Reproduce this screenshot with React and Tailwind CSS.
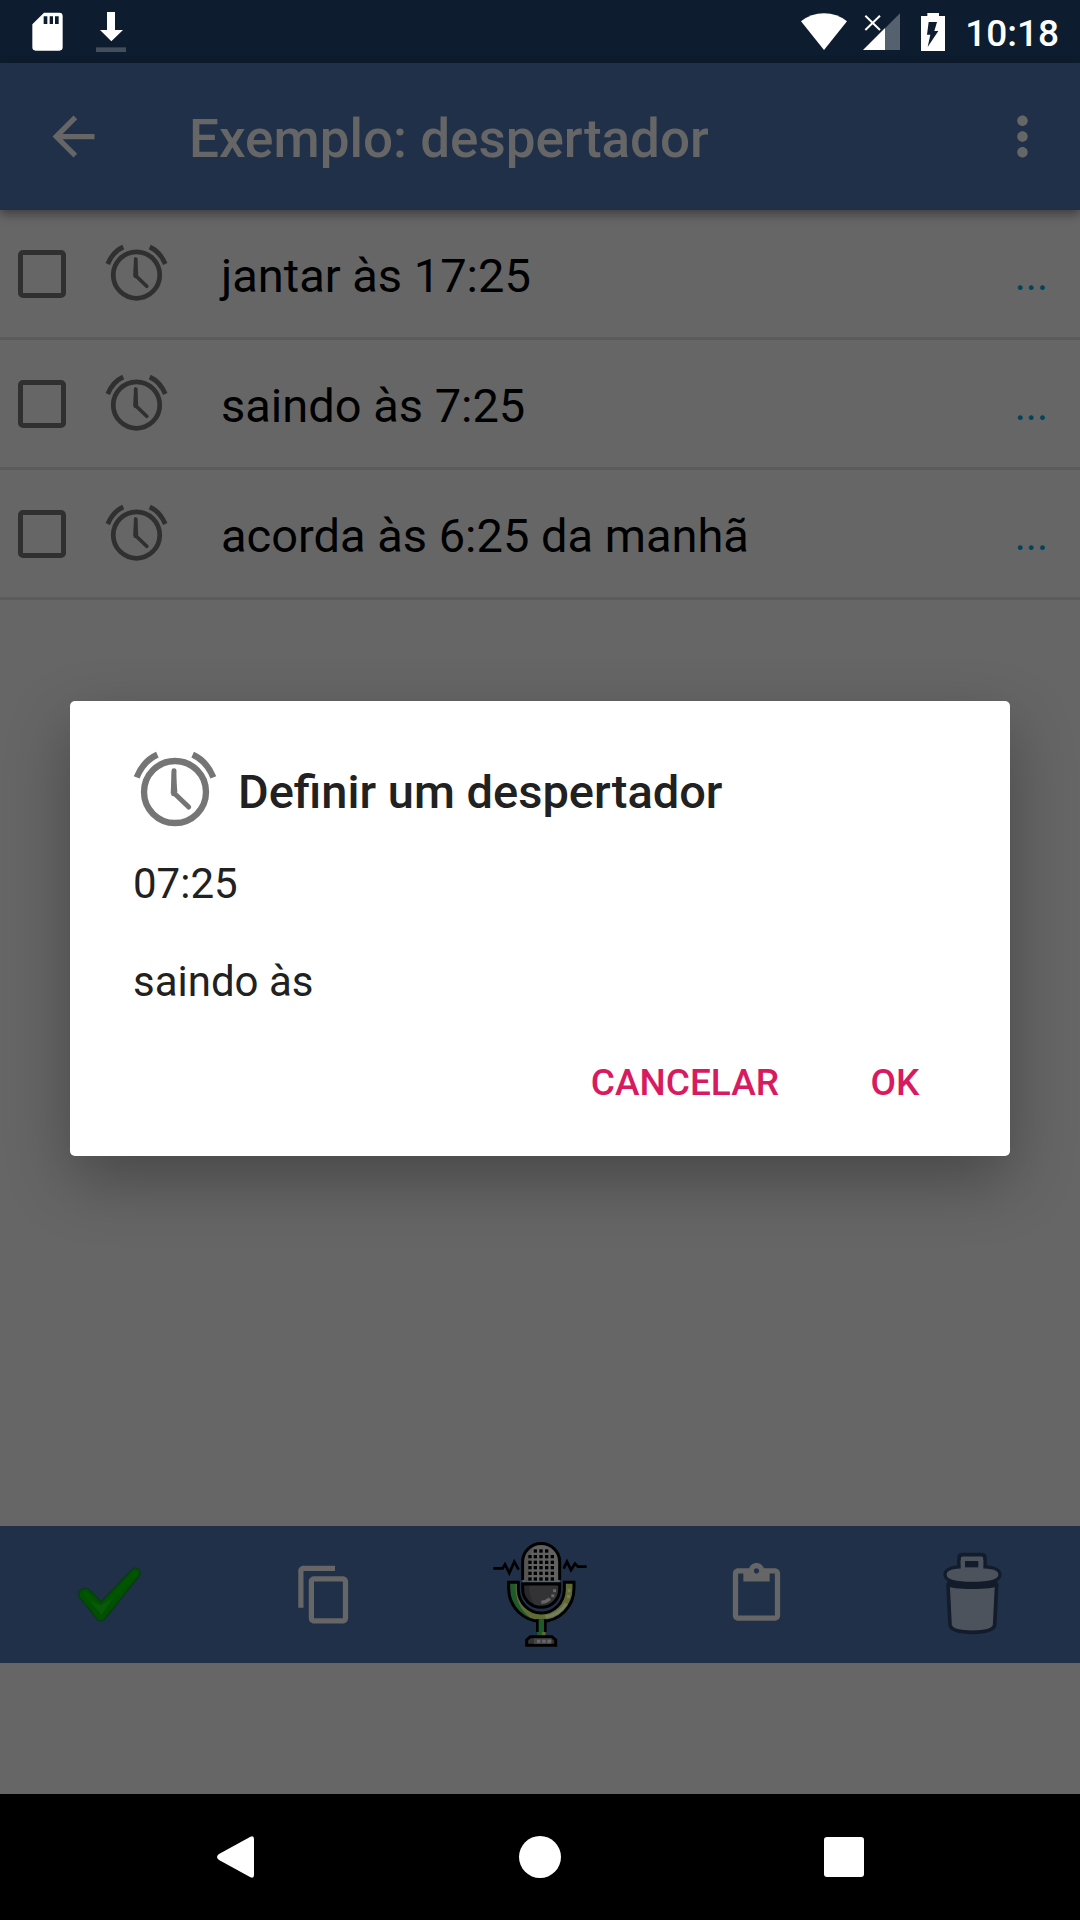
import React from "react";
import {
  MdArrowBack,
  MdMoreVert,
  MdContentCopy,
  MdContentPaste,
} from "react-icons/md";

const items = [
  { id: "a", text: "jantar às 17:25" },
  { id: "b", text: "saindo às 7:25" },
  { id: "c", text: "acorda às 6:25 da manhã" },
];

function AlarmIcon({ className }) {
  return (
    <svg viewBox="0 0 252 252" className={className} fill="none" stroke="currentColor" aria-hidden="true">
      <circle cx="126" cy="132" r="93" strokeWidth="19" />
      <path d="M11 88C24 56 44 33 73 20" strokeWidth="19" />
      <path d="M241 88C228 56 208 33 179 20" strokeWidth="19" />
      <path d="M123 68L122 137" strokeWidth="15" strokeLinecap="round" />
      <path d="M123 135L167 177" strokeWidth="15" strokeLinecap="round" />
      <path d="M117 66h11l5 66-9 10-11-6z" fill="currentColor" stroke="none" />
    </svg>
  );
}

function SdCardIcon() {
  return (
    <svg viewBox="96 36 93 117" className="h-[39px] w-[31px]" aria-hidden="true">
      <path
        fill="#fff"
        fillRule="evenodd"
        d="M132 38H178Q188 38 188 48V142Q188 152 178 152H107Q97 152 97 142V73ZM131 49V72H142V49ZM149 49V72H159V49ZM165 49V72H176V49Z"
      />
    </svg>
  );
}

function DownloadIcon() {
  return (
    <svg viewBox="288 36 90 120" className="h-10 w-[30px]" aria-hidden="true">
      <path fill="#fff" d="M321 36H345V90H369L334 124L300 90H321Z" />
      <path fill="#434e5c" d="M288 142H378V156H288Z" />
    </svg>
  );
}

function WifiIcon() {
  return (
    <svg viewBox="246 37 138 111" className="h-[37px] w-[46px]" aria-hidden="true">
      <path fill="#fff" d="M315 148L246 62Q276 38 315 38T384 62Z" />
    </svg>
  );
}

function SignalIcon() {
  return (
    <svg viewBox="431 37 111 111" className="h-[37px] w-[37px]" aria-hidden="true">
      <path fill="#566170" d="M542 38V148H497V83Z" />
      <path fill="#fff" d="M431 148L497 82V148Z" />
      <path stroke="#fff" strokeWidth="6" d="M438 45L482 88M482 45L438 88" />
    </svg>
  );
}

function BatteryIcon() {
  return (
    <svg viewBox="606 36 72 114" className="h-[38px] w-6" aria-hidden="true">
      <path
        fill="#fff"
        fillRule="evenodd"
        d="M625 36H660V45H678V150H606V45H625ZM629 63L624 101H634L626 138L658 90H646L654 63Z"
      />
    </svg>
  );
}

function CheckIcon() {
  return (
    <svg viewBox="105 155 198 198" className="h-[66px] w-[66px]" aria-hidden="true" strokeLinejoin="round">
      <path
        d="M118 243Q132 228 147 238L183 274L276 178Q287 169 297 178Q305 187 297 198L193 328Q183 337 173 328L119 262Q113 252 118 243Z"
        fill="#005000"
        stroke="#0a3a1c"
        strokeWidth="5"
      />
      <path d="M136 250L183 298L284 190" fill="none" stroke="#005600" strokeWidth="14" strokeLinecap="round" />
      <path d="M150 272L183 285L220 262L184 314Z" fill="#085a0a" />
    </svg>
  );
}

const meshDots = [
  [123, [226, 243, 260]],
  [140, [210, 226, 243, 260, 277]],
  [157, [210, 226, 243, 260, 277]],
  [173, [210, 226, 243, 260, 277]],
  [190, [210, 226, 243, 260, 277]],
  [207, [210, 226, 243, 260, 277]],
];

function MicIcon() {
  return (
    <svg viewBox="96 93 288 321" className="h-[107px] w-24" fill="none" aria-hidden="true">
      <path d="M100 175H128L135 163L148 189L163 155L176 179" stroke="#000" strokeWidth="8" />
      <path d="M311 176L321 155L333 180L345 161L354 170H380" stroke="#000" strokeWidth="8" />
      <path d="M188 216V155a55 55 0 0 1 111 0V216Z" fill="#616161" />
      <path d="M194 216V155Q196 120 225 107Q207 130 207 160V216Z" fill="#555" />
      <path d="M188 210V155a55.500 54.500 0 0 1 111 0V210" stroke="#000" strokeWidth="9" />
      {meshDots.map(([y, xs]) =>
        xs.map((x) => <rect key={x + "-" + y} x={x - 5} y={y - 5} width="10" height="10" fill="#000" />)
      )}
      <path
        d="M146 217H175V240C176 278 206 309 244 309S312 278 313 240V217H342V235C342 290 298 334 244 334S146 290 146 235Z"
        fill="#606b33"
      />
      <path d="M146 217H167V240C169 280 190 312 222 331C178 322 146 285 146 235Z" fill="#1e5a2c" />
      <path d="M256 320C284 317 306 302 319 280" stroke="#747d60" strokeWidth="10" />
      <path d="M323 236h9v11h-9zM321 254h9v10h-9z" fill="#747d60" />
      <path
        d="M146 217H175V240C176 278 206 309 244 309S312 278 313 240V217H342V235C342 290 298 334 244 334S146 290 146 235Z"
        stroke="#000"
        strokeWidth="9"
      />
      <path d="M232 330H256V376H232Z" fill="#1e5a2c" />
      <path d="M246 366H256V376H246Z" fill="#5f6a2f" />
      <path d="M232 328V366M256 328V366" stroke="#000" strokeWidth="8" />
      <path d="M188 222H299V238a55.500 54 0 0 1-111 0Z" fill="#333336" />
      <path d="M192 226H208C206 254 215 276 230 288C206 282 192 262 192 238Z" fill="#29292c" />
      <path d="M188 222H299V238a55.500 54 0 0 1-111 0Z" stroke="#000" strokeWidth="9" />
      <path d="M244 277Q260 275 270 266" stroke="#666" strokeWidth="10" />
      <path d="M274 253h9v9h-9zM279 238h9v9h-9z" fill="#666" />
      <path d="M211 380H276L287 390V406H200V390Z" fill="#333336" stroke="#000" strokeWidth="9" />
      <path d="M222 385H274V402H222Z" fill="#454548" />
      <path d="M231 389h10v9h-10zM247 389h10v9h-10zM262 389h12v9h-12z" fill="#686868" />
    </svg>
  );
}

function TrashIcon() {
  return (
    <svg viewBox="724 121 186 264" className="h-[88px] w-[62px]" fill="#4d535d" stroke="#131c2a" strokeLinejoin="round" aria-hidden="true">
      <path d="M745 222L751 344C755 358 782 365 818 365S881 358 885 344L891 222Z" strokeWidth="11" />
      <path d="M745 222C760 234 876 234 891 222L889 214H747Z" fill="#131c2a" strokeWidth="8" />
      <path d="M778 180V142Q779 132 788 132H846Q855 132 856 142V180Z" strokeWidth="11" />
      <path d="M736 192C736 176 758 168 796 168H840C880 168 901 177 901 192C901 210 868 218 818 218S736 210 736 192Z" strokeWidth="10" />
      <path d="M783 180V148H851V180Z" stroke="none" />
      <path d="M796 151H836V170H796Z" fill="#131c2a" stroke="none" />
    </svg>
  );
}

const tools = [
  { label: "Concluir", icon: <CheckIcon /> },
  { label: "Copiar", icon: <MdContentCopy size={63} /> },
  { label: "Gravar voz", icon: <MicIcon /> },
  { label: "Colar", icon: <MdContentPaste size={63} /> },
  { label: "Excluir", icon: <TrashIcon /> },
];

function StatusBar() {
  return (
    <div className="flex h-[63px] items-center bg-[#0d1c2e] pr-[21px] pl-8 text-white">
      <SdCardIcon />
      <div className="ml-[33px]">
        <DownloadIcon />
      </div>
      <div className="ml-auto flex items-center">
        <WifiIcon />
        <div className="ml-4">
          <SignalIcon />
        </div>
        <div className="ml-[21px]">
          <BatteryIcon />
        </div>
        <span className="ml-5 pt-1 text-[37px] leading-[44px] font-medium">10:18</span>
      </div>
    </div>
  );
}

function NavBar() {
  return (
    <nav className="grid h-[126px] grid-cols-3 bg-black px-[84px]">
      <button aria-label="Voltar" className="flex items-center justify-center">
        <svg viewBox="0 0 38 42" className="h-[42px] w-[38px]" fill="#fff">
          <path d="M2 18L33 1Q37 -1 37 3V39Q37 43 33 41L2 24Q-2 21 2 18Z" />
        </svg>
      </button>
      <button aria-label="Início" className="flex items-center justify-center">
        <span className="size-[42px] rounded-full bg-white" />
      </button>
      <button aria-label="Recentes" className="flex items-center justify-center">
        <span className="size-10 rounded-[3px] bg-white" />
      </button>
    </nav>
  );
}

export default function App() {
  return (
    <div className="flex min-h-screen flex-col bg-[#666666] font-['Roboto',sans-serif]">
      <StatusBar />
      <div className="relative flex flex-1 flex-col">
        <header className="flex h-[147px] items-center bg-[#213049] pr-[26px] pl-[42px] text-[#666666] shadow-[0_4px_10px_rgba(0,0,0,0.4)]">
          <button aria-label="Voltar">
            <MdArrowBack size={63} />
          </button>
          <h1 className="ml-[84px] flex-1 pt-1 text-[53px] leading-[62px] font-medium">Exemplo: despertador</h1>
          <button aria-label="Mais opções">
            <MdMoreVert size={63} />
          </button>
        </header>

        <ul>
          {items.map((item) => (
            <li key={item.id} className="flex h-[130px] items-center border-b-3 border-[#5b5b5b] pr-8 pl-[18px]">
              <input
                type="checkbox"
                id={item.id}
                className="size-12 appearance-none rounded-[5px] border-5 border-[#303030]"
              />
              <AlarmIcon className="ml-[39px] size-[63px] text-[#303030]" />
              <label htmlFor={item.id} className="ml-[53px] flex-1 pt-1 text-[47px] leading-[56px] text-black">
                {item.text}
              </label>
              <button aria-label="Opções do item" className="pt-1 text-[42px] leading-[50px] text-[#00445c]">
                ...
              </button>
            </li>
          ))}
        </ul>

        <div className="mt-auto mb-[131px] grid h-[137px] grid-cols-5 bg-[#213049] text-[#666666]">
          {tools.map((tool) => (
            <button key={tool.label} aria-label={tool.label} className="flex items-center justify-center">
              {tool.icon}
            </button>
          ))}
        </div>

        <div className="absolute inset-0 flex items-center px-[70px]">
          <div
            role="dialog"
            aria-modal="true"
            aria-labelledby="dialog-title"
            className="w-full rounded-[5px] bg-white pt-[47px] pb-[10px] text-[#212121] shadow-[0_24px_64px_rgba(0,0,0,0.3)]"
          >
            <div className="flex items-center px-[63px]">
              <AlarmIcon className="size-[84px] text-[#757575]" />
              <h2 id="dialog-title" className="ml-[21px] pt-1 text-[47px] leading-[56px] font-medium">
                Definir um despertador
              </h2>
            </div>
            <div className="mt-[27px] px-[63px] text-[42px] leading-[49px]">
              <p>07:25</p>
              <p className="mt-[49px]">saindo às</p>
            </div>
            <div className="mt-[14px] flex justify-end gap-[11px] pr-[31px] text-[37px] font-medium text-[#d81b60]">
              <button className="h-[126px] px-[21px]">CANCELAR</button>
              <button className="h-[126px] min-w-[168px] px-[21px]">OK</button>
            </div>
          </div>
        </div>
      </div>
      <NavBar />
    </div>
  );
}
